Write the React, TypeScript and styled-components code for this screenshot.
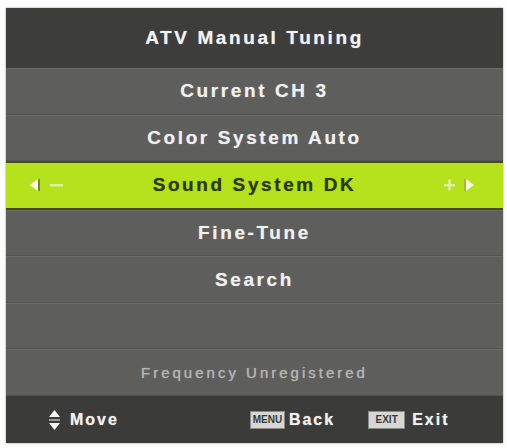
import React from 'react';
import styled, { createGlobalStyle } from 'styled-components';

const GlobalStyle = createGlobalStyle`
    html, body {
        margin: 0;
        padding: 0;
        background: #fdfdfd;
    }
    body {
        font-family: "Liberation Sans", Arial, sans-serif;
    }
`;

const Page = styled.div`
    width: 507px;
    height: 448px;
    padding: 8px 4px 5px 6px;
    box-sizing: border-box;
`;

const Panel = styled.div`
    display: flex;
    flex-direction: column;
    width: 497px;
    height: 435px;
    background-color: #5e5e5d;
    box-shadow: 0 0 2px #9a9a9a;
`;

const Header = styled.div`
    display: flex;
    align-items: center;
    justify-content: center;
    height: 60px;
    flex: none;
    background-color: #3d3d3b;
    color: #f2f2f2;
    font-size: 19px;
    font-weight: bold;
    letter-spacing: 2.6px;
    text-shadow: 0 0 1px rgba(255, 255, 255, 0.6);
`;

interface IRow {
    active?: boolean;
    muted?: boolean;
}

const Row = styled.div<IRow>`
    display: flex;
    align-items: center;
    justify-content: center;
    position: relative;
    flex: 1;
    box-sizing: border-box;
    background-color: ${(props) => (props.active ? '#b6e21d' : '#5e5e5d')};
    border-top: ${(props) => (props.active ? '2px solid #434c22' : '1px solid #6a6a69')};
    border-bottom: ${(props) => (props.active ? '2px solid #434c22' : '1px solid #535352')};
    color: ${(props) => (props.active ? '#2d3a0f' : props.muted ? '#b4b4b2' : '#f0f0f0')};
    font-size: ${(props) => (props.muted ? '15px' : '19px')};
    font-weight: ${(props) => (props.muted ? 'normal' : 'bold')};
    letter-spacing: ${(props) => (props.muted ? '3px' : '2.6px')};
    text-shadow: ${(props) => (props.active ? '0 0 1px rgba(45, 58, 15, 0.6)' : '0 0 1px rgba(255, 255, 255, 0.5)')};
`;

interface ISide {
    side: 'left' | 'right';
}

const Side = styled.div<ISide>`
    position: absolute;
    top: 0;
    bottom: 0;
    ${(props) => (props.side === 'left' ? 'left: 22px;' : 'right: 26px;')}
    display: flex;
    align-items: center;
    gap: 6px;
`;

const Footer = styled.div`
    display: flex;
    align-items: center;
    height: 47px;
    flex: none;
    padding: 0 0 0 42px;
    box-sizing: border-box;
    background-color: #3b3b39;
    color: #f0f0f0;
    font-size: 16px;
    font-weight: bold;
    letter-spacing: 2px;
    text-shadow: 0 0 1px rgba(255, 255, 255, 0.6);
`;

interface IHint {
    gap: number;
    shift: number;
}

const Hint = styled.div<IHint>`
    display: flex;
    align-items: center;
    gap: ${(props) => props.gap}px;
    margin-left: ${(props) => props.shift}px;
`;

interface IKey {
    wide: number;
}

const Key = styled.span<IKey>`
    display: inline-flex;
    align-items: center;
    justify-content: center;
    width: ${(props) => props.wide}px;
    height: 18px;
    background-color: #d6d6d4;
    border: 1px solid #8a8a88;
    box-sizing: border-box;
    color: #3a3a38;
    font-size: 10px;
    font-weight: bold;
    letter-spacing: 0;
    text-shadow: none;
`;

const LeftArrow = () => (
    <svg width="16" height="16" viewBox="0 0 16 16">
        <polygon points="10,2 10,14 2,8" fill="#f6fbe4" />
        <line x1="11" y1="2" x2="11" y2="14" stroke="#5d6b1e" strokeWidth="1.5" />
    </svg>
);

const RightArrow = () => (
    <svg width="16" height="16" viewBox="0 0 16 16">
        <line x1="4" y1="2" x2="4" y2="14" stroke="#8ba51c" strokeWidth="1" />
        <polygon points="5,2 5,14 13,8" fill="#f6fbe4" />
    </svg>
);

const Minus = () => (
    <svg width="13" height="12" viewBox="0 0 13 12">
        <rect x="0" y="5" width="13" height="2.5" fill="#dff09a" />
    </svg>
);

const Plus = () => (
    <svg width="11" height="12" viewBox="0 0 11 12">
        <rect x="0" y="5" width="11" height="2.5" fill="#dff09a" />
        <rect x="4.2" y="0.5" width="2.5" height="11" fill="#dff09a" />
    </svg>
);

const MoveIcon = () => (
    <svg width="13" height="22" viewBox="0 0 13 22">
        <polygon points="6.5,1 12,8 1,8" fill="#f4f4f4" />
        <rect x="1" y="10" width="11" height="2" fill="#9a9a98" />
        <polygon points="1,14 12,14 6.5,21" fill="#f4f4f4" />
    </svg>
);

const rows = [
    { label: 'Current CH 3' },
    { label: 'Color System Auto' },
    { label: 'Sound System DK', active: true },
    { label: 'Fine-Tune' },
    { label: 'Search' },
    { label: '' },
    { label: 'Frequency Unregistered', muted: true },
];

const App: React.FC = () => {
    return (
        <>
            <GlobalStyle />
            <Page>
                <Panel>
                    <Header>ATV Manual Tuning</Header>
                    {rows.map((row, i) => (
                        <Row key={i} active={row.active} muted={row.muted}>
                            {row.active && (
                                <Side side="left">
                                    <LeftArrow />
                                    <Minus />
                                </Side>
                            )}
                            {row.label}
                            {row.active && (
                                <Side side="right">
                                    <Plus />
                                    <RightArrow />
                                </Side>
                            )}
                        </Row>
                    ))}
                    <Footer>
                        <Hint gap={9} shift={0}>
                            <MoveIcon />
                            <span>Move</span>
                        </Hint>
                        <Hint gap={4} shift={131}>
                            <Key wide={35}>MENU</Key>
                            <span>Back</span>
                        </Hint>
                        <Hint gap={7} shift={33}>
                            <Key wide={37}>EXIT</Key>
                            <span>Exit</span>
                        </Hint>
                    </Footer>
                </Panel>
            </Page>
        </>
    );
};

export default App;
